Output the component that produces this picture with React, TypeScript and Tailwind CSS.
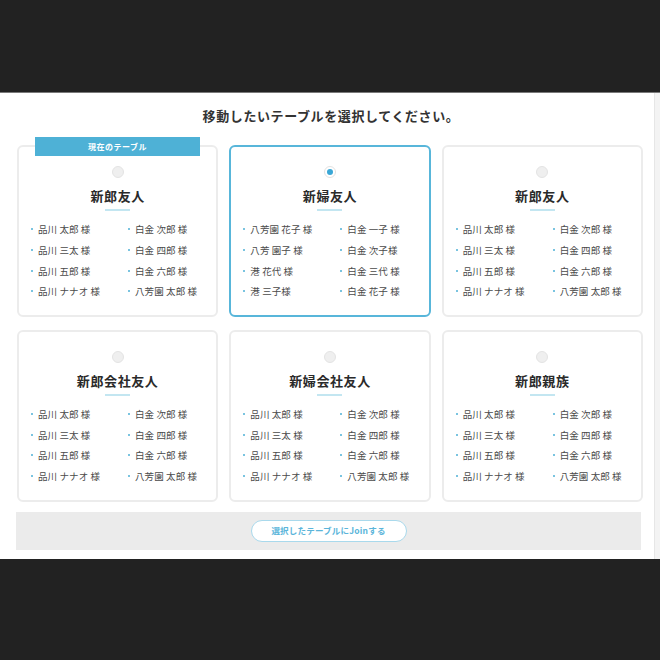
const FONT = { fontFamily: '"Noto Sans CJK JP", "Noto Sans", sans-serif' }

const GROOM_GUESTS = [
  "品川 太郎 様",
  "白金 次郎 様",
  "品川 三太 様",
  "白金 四郎 様",
  "品川 五郎 様",
  "白金 六郎 様",
  "品川 ナナオ 様",
  "八芳園 太郎 様",
]

const BRIDE_GUESTS = [
  "八芳園 花子 様",
  "白金 一子 様",
  "八芳 園子 様",
  "白金 次子様",
  "港 花代 様",
  "白金 三代 様",
  "港 三子様",
  "白金 花子 様",
]

type Table = {
  name: string
  guests: string[]
  current?: boolean
  selected?: boolean
}

const TABLES: Table[] = [
  { name: "新郎友人", guests: GROOM_GUESTS, current: true },
  { name: "新婦友人", guests: BRIDE_GUESTS, selected: true },
  { name: "新郎友人", guests: GROOM_GUESTS },
  { name: "新郎会社友人", guests: GROOM_GUESTS },
  { name: "新婦会社友人", guests: GROOM_GUESTS },
  { name: "新郎親族", guests: GROOM_GUESTS },
]

function TableCard({ table }: { table: Table }) {
  return (
    <div
      className={
        "relative flex flex-col items-center rounded-[6px] border-2 bg-white pt-[19px] pb-[13px] " +
        (table.selected ? "border-[#58b6da]" : "border-[#ececec]")
      }
    >
      {/* 現在のテーブル ラベル */}
      {table.current && (
        <div className="absolute -top-[10px] left-[16px] flex h-[19px] w-[165px] items-center justify-center bg-[#4eb1d6] text-[8px] font-bold tracking-[0.5px] text-white">
          現在のテーブル
        </div>
      )}

      {/* ラジオ */}
      {table.selected ? (
        <div className="flex h-[12px] w-[12px] items-center justify-center rounded-full border border-[#e2e2e2] bg-white">
          <div className="h-[6px] w-[6px] rounded-full bg-[#3aa7d6]" />
        </div>
      ) : (
        <div className="h-[12px] w-[12px] rounded-full border border-[#e4e4e4] bg-[#efefef]" />
      )}

      <h3 className="mt-[9px] text-[13px] leading-[18px] font-bold tracking-[0.6px] text-[#2a2a2a]">
        {table.name}
      </h3>
      <div className="mt-[4px] h-[2px] w-[25px] bg-[#c3e6f1]" />

      {/* ゲスト一覧 */}
      <ul className="mt-[8px] grid w-full grid-cols-[97px_1fr] pl-[12px]">
        {table.guests.map((g, i) => (
          <li
            key={i}
            className="flex h-[20.7px] items-center text-[9.5px] tracking-[0.1px] whitespace-nowrap text-[#4a4a4a]"
          >
            <span className="mr-[5px] inline-block h-[2px] w-[2px] rounded-full bg-[#4eb1d6]" />
            {g}
          </li>
        ))}
      </ul>
    </div>
  )
}

export default function App() {
  return (
    <div className="flex h-[660px] w-[660px] flex-col bg-[#222222]" style={FONT}>
      {/* ヘッダー（暗） */}
      <div className="h-[93px] shrink-0 border-b border-[#7a7a7a]" />

      {/* モーダル本体 */}
      <div className="flex h-[466px] shrink-0 bg-white">
        <div className="flex flex-1 flex-col">
          <h2 className="mt-[13px] pl-[8px] text-center text-[13px] leading-[20px] font-semibold tracking-[0.6px] text-[#333333]">
            移動したいテーブルを選択してください。
          </h2>

          <div className="mt-[19px] grid grid-cols-3 gap-x-[11px] gap-y-[13px] pr-[11px] pl-[17px]">
            {TABLES.map((t, i) => (
              <TableCard key={i} table={t} />
            ))}
          </div>

          {/* フッター */}
          <div className="mt-[10px] mr-[13px] ml-[16px] flex h-[38px] items-center justify-center bg-[#ebebeb]">
            <button className="flex h-[22px] w-[156px] items-center justify-center rounded-full border border-[#a9d9ec] bg-white text-[8.5px] font-bold tracking-[0.2px] text-[#5bb5da]">
              選択したテーブルにJoinする
            </button>
          </div>
        </div>

        {/* スクロールバー */}
        <div className="w-[6px] border-l border-[#e6e6e6] bg-[#f3f3f3]" />
      </div>

      <div className="flex-1" />
    </div>
  )
}
